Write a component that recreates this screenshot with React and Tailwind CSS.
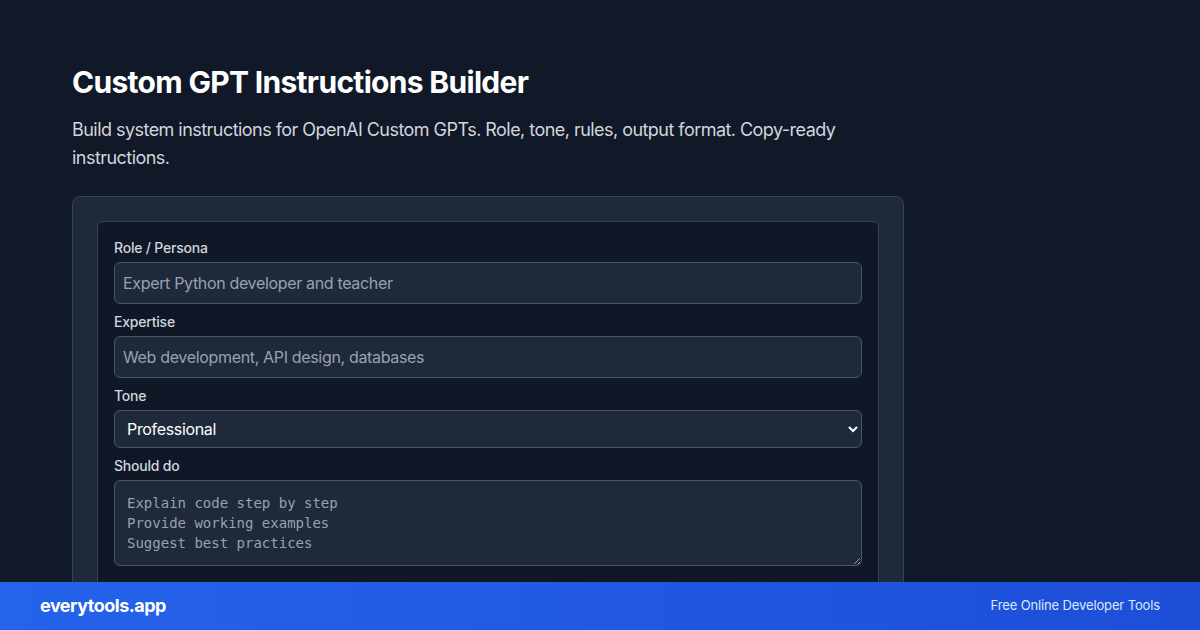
import React from "react";

export default function App() {
  return (
    <div className="relative h-[630px] w-[1200px] overflow-hidden bg-[#111827] font-[Inter,sans-serif] tracking-tight">
      <div className="px-[72px] pt-16">
        <h1 className="text-3xl font-bold leading-9 text-white tracking-[-0.023em]">Custom GPT Instructions Builder</h1>
        <p className="mt-4 max-w-[790px] text-lg leading-7 text-gray-300 tracking-[-0.03em]">
          Build system instructions for OpenAI Custom GPTs. Role, tone, rules, output format. Copy-ready instructions.
        </p>
        <div className="mt-6 w-[832px] rounded-lg border border-gray-700 bg-gray-800 p-6">
          <div className="rounded-md border border-gray-700 bg-gray-900 p-4 pb-16">
            <div className="flex flex-col gap-2">
              <div>
                <label className="mb-1 block text-sm font-medium leading-5 text-gray-300 tracking-[-0.015em]">Role / Persona</label>
                <input
                  className="block w-full rounded-md border border-gray-600 bg-gray-800 px-2 py-2 text-base leading-6 text-white placeholder:text-gray-400 outline-none tracking-[-0.021em]"
                  placeholder="Expert Python developer and teacher"
                />
              </div>
              <div>
                <label className="mb-1 block text-sm font-medium leading-5 text-gray-300 tracking-[-0.015em]">Expertise</label>
                <input
                  className="block w-full rounded-md border border-gray-600 bg-gray-800 px-2 py-2 text-base leading-6 text-white placeholder:text-gray-400 outline-none tracking-[-0.021em]"
                  placeholder="Web development, API design, databases"
                />
              </div>
              <div>
                <label className="mb-1 block text-sm font-medium leading-5 text-gray-300 tracking-[-0.015em]">Tone</label>
                <select
                  className="block h-[38px] w-full rounded-md border border-gray-600 bg-gray-800 px-2 text-base leading-6 text-white [color-scheme:dark] outline-none tracking-[-0.021em]"
                  defaultValue="Professional"
                >
                  <option>Professional</option>
                  <option>Friendly</option>
                  <option>Casual</option>
                </select>
              </div>
              <div>
                <label className="mb-1 block text-sm font-medium leading-5 text-gray-300 tracking-[-0.015em]">Should do</label>
                <textarea
                  rows={3}
                  className="block h-[86px] w-full rounded-md border border-gray-600 bg-gray-800 px-3 py-3 font-['DejaVu_Sans_Mono',monospace] text-sm leading-5 tracking-normal text-white placeholder:text-gray-400 [color-scheme:dark] outline-none"
                  placeholder={"Explain code step by step\nProvide working examples\nSuggest best practices"}
                />
              </div>
            </div>
          </div>
        </div>
      </div>
      <div className="absolute bottom-0 left-0 flex h-12 w-full items-center justify-between bg-gradient-to-r from-[#2563eb] to-[#1d4ed8] px-10">
        <span className="text-lg font-bold text-white tracking-[-0.028em]">everytools.app</span>
        <span className="text-[13px] text-blue-100 tracking-[-0.01em]">Free Online Developer Tools</span>
      </div>
    </div>
  );
}
